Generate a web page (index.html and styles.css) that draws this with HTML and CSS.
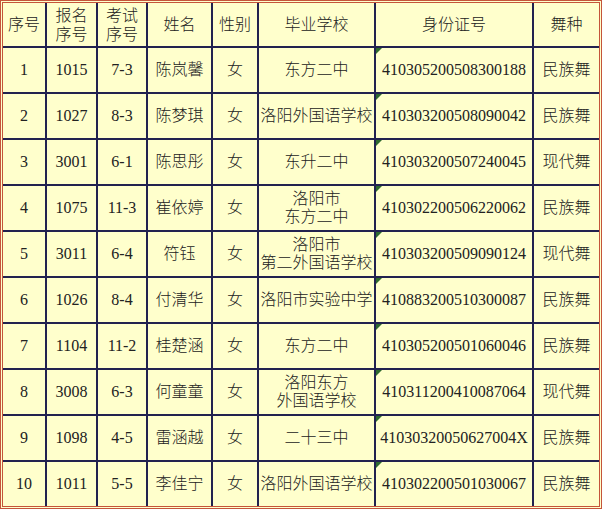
FILE: index.html
```html
<!DOCTYPE html>
<html lang="zh-CN">
<head>
<meta charset="utf-8">
<title>名单</title>
<link rel="stylesheet" href="styles.css">
</head>
<body>
<div class="frame">
<table class="roster">
<colgroup>
<col class="c1"><col class="c2"><col class="c3"><col class="c4"><col class="c5"><col class="c6"><col class="c7"><col class="c8">
</colgroup>
<thead>
<tr><th>序号</th><th>报名<br>序号</th><th>考试<br>序号</th><th>姓名</th><th>性别</th><th>毕业学校</th><th>身份证号</th><th>舞种</th></tr>
</thead>
<tbody>
<tr><td>1</td><td>1015</td><td>7-3</td><td>陈岚馨</td><td>女</td><td>东方二中</td><td class="id"><span class="flag"></span>410305200508300188</td><td>民族舞</td></tr>
<tr><td>2</td><td>1027</td><td>8-3</td><td>陈梦琪</td><td>女</td><td>洛阳外国语学校</td><td class="id"><span class="flag"></span>410303200508090042</td><td>民族舞</td></tr>
<tr><td>3</td><td>3001</td><td>6-1</td><td>陈思彤</td><td>女</td><td>东升二中</td><td class="id"><span class="flag"></span>410303200507240045</td><td>现代舞</td></tr>
<tr><td>4</td><td>1075</td><td>11-3</td><td>崔依婷</td><td>女</td><td>洛阳市<br>东方二中</td><td class="id"><span class="flag"></span>410302200506220062</td><td>民族舞</td></tr>
<tr><td>5</td><td>3011</td><td>6-4</td><td>符钰</td><td>女</td><td>洛阳市<br>第二外国语学校</td><td class="id"><span class="flag"></span>410303200509090124</td><td>现代舞</td></tr>
<tr><td>6</td><td>1026</td><td>8-4</td><td>付清华</td><td>女</td><td>洛阳市实验中学</td><td class="id"><span class="flag"></span>410883200510300087</td><td>民族舞</td></tr>
<tr><td>7</td><td>1104</td><td>11-2</td><td>桂楚涵</td><td>女</td><td>东方二中</td><td class="id"><span class="flag"></span>410305200501060046</td><td>民族舞</td></tr>
<tr><td>8</td><td>3008</td><td>6-3</td><td>何童童</td><td>女</td><td>洛阳东方<br>外国语学校</td><td class="id"><span class="flag"></span>410311200410087064</td><td>现代舞</td></tr>
<tr><td>9</td><td>1098</td><td>4-5</td><td>雷涵越</td><td>女</td><td>二十三中</td><td class="id"><span class="flag"></span>41030320050627004X</td><td>民族舞</td></tr>
<tr><td>10</td><td>1011</td><td>5-5</td><td>李佳宁</td><td>女</td><td>洛阳外国语学校</td><td class="id"><span class="flag"></span>410302200501030067</td><td>民族舞</td></tr>
</tbody>
</table>
</div>
</body>
</html>
```
FILE: styles.css
```css
html, body {
  margin: 0;
  padding: 0;
  background: #ffffff;
}

.frame {
  width: 596px;
  border: 3px double #c4553a;
  background: #ffffcc;
}

.roster {
  width: 596px;
  table-layout: fixed;
  border-collapse: collapse;
  border-style: hidden;
  font-family: "Liberation Serif", "Noto Sans CJK SC", serif;
  font-size: 16px;
  line-height: 18px;
  color: #222222;
  background: #ffffcc;
}

.c1 { width: 43px; }
.c2 { width: 51px; }
.c3 { width: 50px; }
.c4 { width: 65px; }
.c5 { width: 46px; }
.c6 { width: 117px; }
.c7 { width: 158px; }
.c8 { width: 66px; }

.roster th,
.roster td {
  border: 2px solid #22224f;
  padding: 0;
  text-align: center;
  vertical-align: middle;
  font-weight: 300;
  white-space: nowrap;
  overflow: hidden;
}

.roster th {
  height: 43px;
  line-height: 19px;
}

.roster td {
  height: 44px;
}

.roster td.id {
  position: relative;
}

.flag {
  position: absolute;
  left: 0;
  top: 0;
  width: 0;
  height: 0;
  border-top: 6px solid #2f6a2f;
  border-right: 6px solid transparent;
}
```
